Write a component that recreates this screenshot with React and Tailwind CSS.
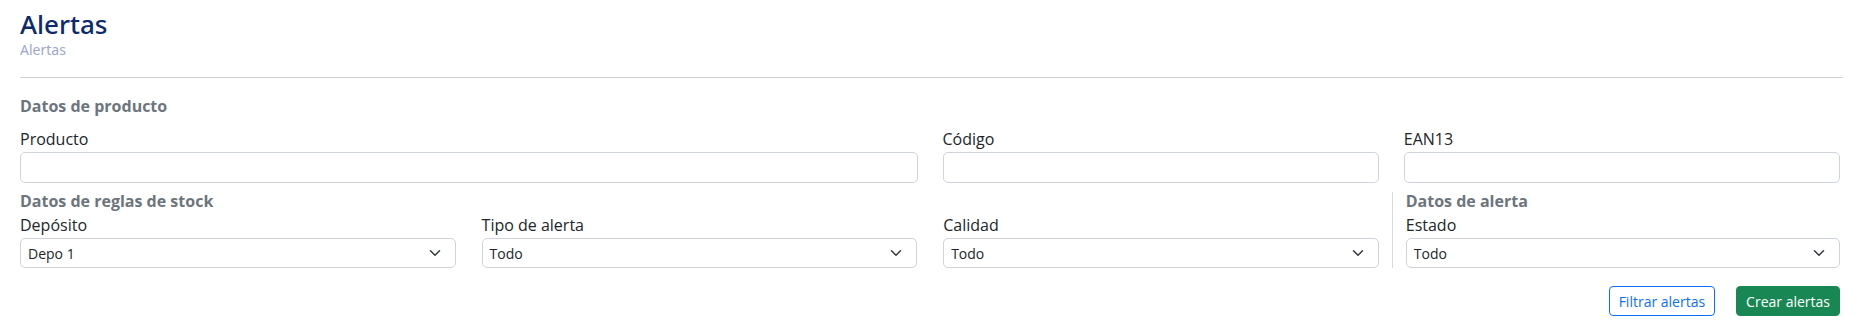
import React from "react";

function Field({ label, className = "" }) {
  return (
    <div className={className}>
      <label className="block text-[16px] leading-[24px] text-[#212529]">{label}</label>
      <input
        type="text"
        className="mt-[1px] block h-[31px] w-full rounded-[5px] border border-[#ced4da] bg-white px-3 text-[14px] outline-none"
      />
    </div>
  );
}

function SelectField({ label, value }) {
  return (
    <div>
      <label className="block text-[16px] leading-[24px] text-[#212529]">{label}</label>
      <div className="mt-[1px] flex h-[30px] w-full items-center justify-between rounded-[5px] border border-[#ced4da] bg-white pl-[7px] pr-[12px]">
        <span className="text-[14px] text-[#212529]">{value}</span>
        <svg width="16" height="12" viewBox="0 0 16 16" fill="none">
          <path d="m2 5 6 6 6-6" stroke="#343a40" strokeWidth="2" strokeLinecap="round" strokeLinejoin="round" />
        </svg>
      </div>
    </div>
  );
}

export default function App() {
  return (
    <div className="min-h-[325px] bg-white px-[20px] pt-[8px] font-['Open_Sans',sans-serif] text-[#212529]">
      <h1 className="font-['Noto_Sans',sans-serif] text-[26px] font-medium leading-[32px] text-[#0b2b6e]">Alertas</h1>
      <div className="font-['Noto_Sans',sans-serif] text-[14px] leading-[20px] text-[#9ea6cc]">Alertas</div>

      <hr className="mt-[17px] border-t border-[#d0d4da]" />

      <div className="w-[1820px]">
        <h6 className="mb-[9px] mt-[16px] text-[16px] font-bold leading-[24px] text-[#6c757d]">Datos de producto</h6>
        <div className="grid grid-cols-4 gap-x-[25px]">
          <Field label="Producto" className="col-span-2" />
          <Field label="Código" />
          <Field label="EAN13" />
        </div>

        <div className="mt-[6px] grid grid-cols-4 gap-x-[25px]">
          <div className="col-span-3">
            <h6 className="text-[16px] font-bold leading-[24px] text-[#6c757d]">Datos de reglas de stock</h6>
            <div className="grid grid-cols-3 gap-x-[26px]">
              <SelectField label="Depósito" value="Depo 1" />
              <SelectField label="Tipo de alerta" value="Todo" />
              <SelectField label="Calidad" value="Todo" />
            </div>
          </div>
          <div className="-ml-[12px] mt-[3px] border-l border-[#d6d9dd] pl-[13px]">
            <h6 className="-mt-[3px] text-[16px] font-bold leading-[24px] text-[#6c757d]">Datos de alerta</h6>
            <SelectField label="Estado" value="Todo" />
          </div>
        </div>

        <div className="mt-[18px] flex justify-end gap-[21px]">
          <button className="h-[30px] rounded-[4px] border border-[#0d6efd] bg-white px-[9px] text-[14px] text-[#0d6efd]">
            Filtrar alertas
          </button>
          <button className="h-[30px] rounded-[4px] border border-[#198754] bg-[#198754] px-[9px] text-[14px] text-white">
            Crear alertas
          </button>
        </div>
      </div>
    </div>
  );
}
